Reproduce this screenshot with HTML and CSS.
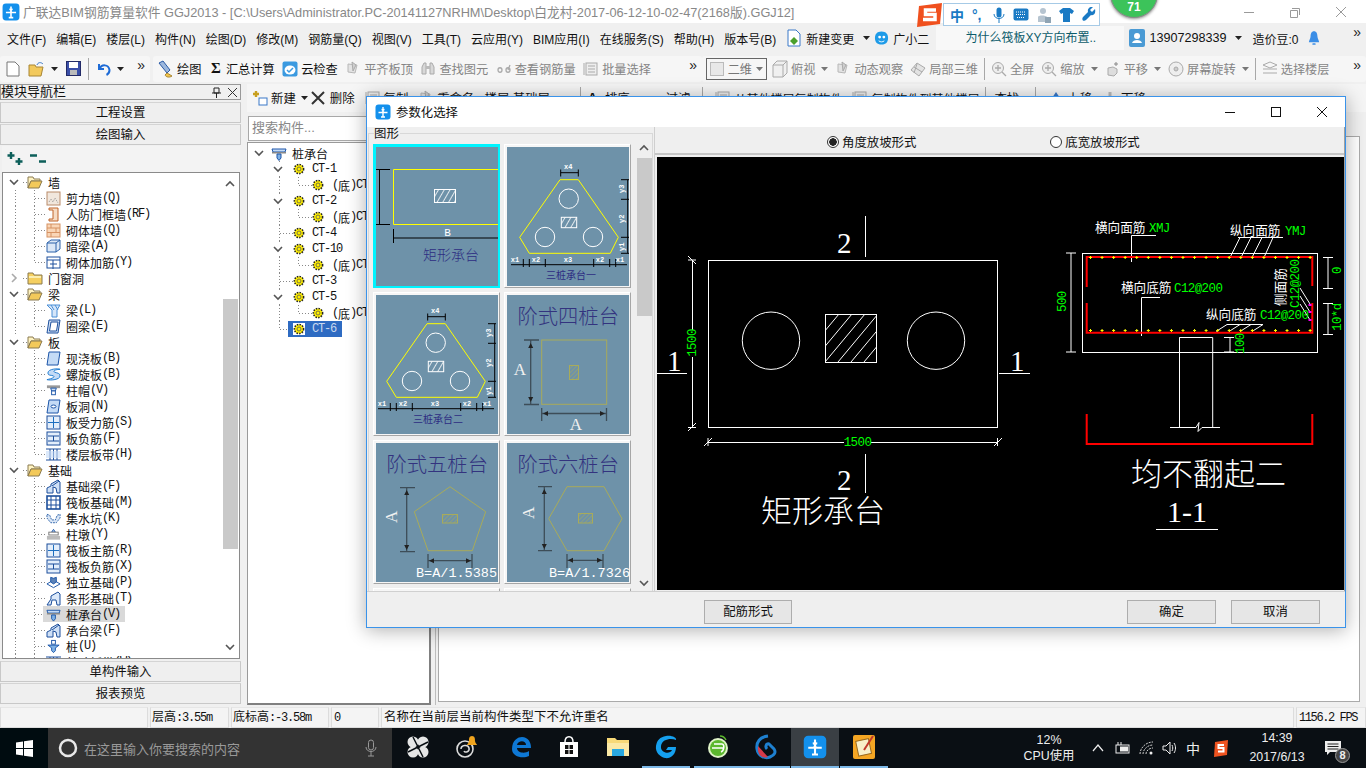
FILE: index.html
```html
<!DOCTYPE html>
<html lang="zh">
<head>
<meta charset="utf-8">
<title>广联达BIM钢筋算量软件</title>
<link rel="stylesheet" href="styles.css">
</head>
<body>
<svg class="sprite" aria-hidden="true">
<defs>
<pattern id="hatchW" width="5" height="5" patternUnits="userSpaceOnUse" patternTransform="rotate(30)"><line x1="0" y1="0" x2="0" y2="5" stroke="#fff" stroke-width="1.6"/></pattern>
<pattern id="hatchY" width="3" height="3" patternUnits="userSpaceOnUse" patternTransform="rotate(45)"><line x1="0" y1="0" x2="0" y2="3" stroke="#a8ab5a" stroke-width="1"/></pattern>
<symbol id="chev" viewBox="0 0 10 10"><polyline points="1,3 5,7 9,3" fill="none" stroke="#555" stroke-width="1.6"/></symbol>
<symbol id="chevr" viewBox="0 0 10 10"><polyline points="3,1 7,5 3,9" fill="none" stroke="#aaa" stroke-width="1.6"/></symbol>
<symbol id="folderO" viewBox="0 0 16 14"><path d="M1 2h5l1 2h6v2H4L1 13z" fill="#fff3c0" stroke="#8a7a50"/><path d="M4 6h11l-3 7H1z" fill="#f3c95a" stroke="#8a7a50"/></symbol>
<symbol id="folderC" viewBox="0 0 16 14"><path d="M1 2h5l1 2h8v9H1z" fill="#f5cf5f" stroke="#8a7a50"/><path d="M2 5h12v2H2z" fill="#fbeeb0"/></symbol>
<symbol id="gear" viewBox="0 0 12 12"><circle cx="6" cy="6" r="4.6" fill="#ffef00" stroke="#222" stroke-width="1.6" stroke-dasharray="1.5 1.2"/><circle cx="6" cy="6" r="2" fill="#ffef00" stroke="#555" stroke-width=".8"/></symbol>
<symbol id="app" viewBox="0 0 16 16"><rect x=".5" y=".5" width="15" height="15" rx="3" fill="#1390ec"/><path d="M8 3v10M3.5 8.5h3a1.5 1.5 0 0 0 0-3M12.5 8.5h-3a1.5 1.5 0 0 1 0-3M6 13h4" fill="none" stroke="#fff" stroke-width="1.4"/></symbol>
<symbol id="sw" viewBox="0 0 15 15"><rect x="1" y="1" width="13" height="13" fill="#f1e7dd" stroke="#b98b6a"/><path d="M3 11l2-3 2 3 2-4 3 5" stroke="#999" stroke-dasharray="1 1" fill="none"/></symbol>
<symbol id="door" viewBox="0 0 15 15"><path d="M3 1h9v13H3v-2h4V3H3z" fill="#f6dcc5" stroke="#c0642a"/></symbol>
<symbol id="brick" viewBox="0 0 15 15"><rect x="1" y="1" width="13" height="13" fill="#f9d6b7" stroke="#d69263"/><path d="M1 5h13M1 9.500h13M5 1v4M10 5v4.500M5 9.500V14" stroke="#d69263" fill="none"/></symbol>
<symbol id="ab" viewBox="0 0 15 15"><path d="M1 4l4-3h9v9l-4 3H1z" fill="#dbe7f6" stroke="#2d62aa"/><path d="M1 4h9v9M10 4l4-3" fill="none" stroke="#2d62aa"/></symbol>
<symbol id="rb" viewBox="0 0 15 15"><rect x="1" y="2" width="13" height="11" fill="#fff" stroke="#1d4f9c"/><path d="M1 5h13M7 5v9M4 9h7" stroke="#1d4f9c" fill="none"/></symbol>
<symbol id="beam" viewBox="0 0 15 15"><path d="M1 2h13l-3 5v7H6V7z" fill="#d5e6fa" stroke="#4a8fd6"/><path d="M5 2l3 5M9 2l3 5" stroke="#4a8fd6"/></symbol>
<symbol id="ring" viewBox="0 0 15 15"><path d="M3 1h11l-2 13H1z" fill="#cfe0f6" stroke="#1d4f9c"/><path d="M5 3h7l-1.500 9H3.500z" fill="#fff" stroke="#1d4f9c"/></symbol>
<symbol id="slab" viewBox="0 0 15 15"><path d="M3 1h11l-2 13H1z" fill="#c4dbf6" stroke="#1c55a8"/></symbol>
<symbol id="spiral" viewBox="0 0 16 15"><path d="M2 6c0-5 12-5 13-4-3 0-8 1-6 3 3 1 6 1 6 4 0 4-10 5-14 4 4-1 9-2 7-4-2-1-6 0-6-3z" fill="#c4dbf6" stroke="#1c7ad0"/></symbol>
<symbol id="cap" viewBox="0 0 16 15"><rect x="1" y="2" width="14" height="3" fill="#999"/><path d="M5 5h6l-1 3H6z" fill="#cfe0f6" stroke="#1c55a8"/><rect x="6" y="8" width="4" height="4" fill="#fff" stroke="#1c55a8"/></symbol>
<symbol id="hole" viewBox="0 0 15 15"><path d="M3 1h11l-2 13H1z" fill="#c4dbf6" stroke="#1c55a8"/><ellipse cx="7.500" cy="7.500" rx="2.500" ry="1.500" fill="#fff" stroke="#1c55a8"/></symbol>
<symbol id="grid1" viewBox="0 0 15 15"><rect x="1" y="1" width="13" height="13" fill="#e3eefb" stroke="#1d4f9c"/><path d="M7.500 2v11M2 7.500h11" stroke="#1d6fc0" fill="none"/></symbol>
<symbol id="grid2" viewBox="0 0 15 15"><rect x="1" y="1" width="13" height="13" fill="#e3eefb" stroke="#1d4f9c"/><path d="M2 5h11M2 10h11M7.500 5v5" stroke="#1d4f9c" fill="none"/></symbol>
<symbol id="band" viewBox="0 0 15 15"><path d="M0 2h15M0 13h15M4 2v11M7.500 2v11M11 2v11" stroke="#1d4f9c" fill="none"/><rect y="4" width="15" height="7" fill="#c4dbf6" opacity=".6"/></symbol>
<symbol id="found" viewBox="0 0 15 15"><path d="M1 14V9l4-2V5l7-4 2 2v11h-3l-1-5-3-1v6z" fill="#cfe0f6" stroke="#1d4f9c"/><path d="M6 7l7-5" stroke="#1d4f9c"/></symbol>
<symbol id="raft" viewBox="0 0 15 15"><rect x="1" y="1" width="13" height="13" fill="#fff" stroke="#1d4f9c" stroke-width="1.600"/><path d="M1 5h13M1 10h13M5 1v13M10 1v13" stroke="#1d4f9c"/></symbol>
<symbol id="sump" viewBox="0 0 16 15"><path d="M1 3l3 1 2 5h4l2-5 3-1v4l-4 5H5L1 7z" fill="#dbe7f6" stroke="#2d62aa" stroke-dasharray="2 1"/></symbol>
<symbol id="pad" viewBox="0 0 16 15"><path d="M6 5l2-3 2 3z" fill="#c4dbf6" stroke="#1c55a8"/><rect x="3" y="5" width="10" height="3" fill="#fff" stroke="#777"/><rect x="1" y="9" width="14" height="4" fill="#bbb"/></symbol>
<symbol id="iso" viewBox="0 0 16 15"><path d="M1 9l7-4 7 4-7 4z" fill="#fff" stroke="#1c55a8"/><path d="M5 7V2l3 1 3-1v5l-3 2z" fill="#5b82b8" stroke="#1c55a8"/></symbol>
<symbol id="strip" viewBox="0 0 15 15"><path d="M1 14l4-6V5l7-4 2 2v11H11l-1-5H6l-1 5z" fill="#dce9f9" stroke="#1d4f9c"/></symbol>
<symbol id="cap2" viewBox="0 0 16 15"><path d="M1 3h14l-1 3H2z" fill="#c4dbf6" stroke="#1c55a8"/><rect x="1" y="6" width="14" height="1.500" fill="#888"/><path d="M6 8h4v4l-2 2.500L6 12z" fill="#7fb2e6" stroke="#1c55a8"/></symbol>
<symbol id="pile" viewBox="0 0 16 15"><rect x="6" y="1" width="4" height="4" fill="#fff" stroke="#1c55a8"/><path d="M2 6h12l-4 3v3l-2 2-2-2V9z" fill="#7fb2e6" stroke="#1c55a8"/></symbol>
<symbol id="caret" viewBox="0 0 7 4"><path d="M0 0h7L3.500 4z" fill="#222"/></symbol>
<symbol id="caretg" viewBox="0 0 7 4"><path d="M0 0h7L3.500 4z" fill="#777"/></symbol>
<symbol id="gicon" viewBox="0 0 16 16"><path d="M3 3l9 1-2 8-7-1z" fill="#e3e3e3" stroke="#b8b8b8"/><path d="M7 1l4 3-3 6z" fill="#cfcfcf" stroke="#aaa"/></symbol>
<symbol id="bino" viewBox="0 0 16 16"><path d="M2 6l2-4h2v11H2zM14 6l-2-4h-2v11h4z" fill="#d8d8d8" stroke="#aaa"/><rect x="6" y="5" width="4" height="3" fill="#bbb"/></symbol>
<symbol id="list" viewBox="0 0 16 16"><rect x="3" y="2" width="11" height="12" fill="#eee" stroke="#aaa"/><path d="M1 2v12M5 5h7M5 8h7M5 11h7" stroke="#aaa"/></symbol>
<symbol id="glass" viewBox="0 0 16 16"><circle cx="7" cy="7" r="5.500" fill="#eee" stroke="#aaa"/><path d="M11 11l4 4M7 4v6M4 7h6" stroke="#aaa" stroke-width="1.300"/></symbol>
</defs>
</svg>

<header class="title">
  <svg class="ic16" width="18" height="18"><use href="#app"/></svg>
  <span class="title-text">广联达BIM钢筋算量软件 GGJ2013 - [C:\Users\Administrator.PC-20141127NRHM\Desktop\白龙村-2017-06-12-10-02-47(2168版).GGJ12]</span>
  <div class="wctl">
    <svg width="12" height="12" viewBox="0 0 12 12"><path d="M1 6.500h10" stroke="#9a9a9a"/></svg>
    <svg width="12" height="12" viewBox="0 0 12 12"><path d="M3 2.500h7.500V9M1.500 4.500h7v7h-7z" fill="none" stroke="#9a9a9a"/></svg>
    <svg width="12" height="12" viewBox="0 0 12 12"><path d="M1 1l10 10M11 1L1 11" stroke="#9a9a9a"/></svg>
  </div>
</header>

<nav class="menu">
  <span>文件(F)</span><span>编辑(E)</span><span>楼层(L)</span><span>构件(N)</span><span>绘图(D)</span><span>修改(M)</span><span>钢筋量(Q)</span><span>视图(V)</span><span>工具(T)</span><span>云应用(Y)</span><span>BIM应用(I)</span><span>在线服务(S)</span><span>帮助(H)</span><span>版本号(B)</span>
  <span class="mi"><svg width="16" height="18" viewBox="0 0 16 18"><path d="M2 1h8l4 4v12H2z" fill="#fff" stroke="#3a78c8"/><path d="M8 8l4 4-4 4-4-4z" fill="#4aa02c"/></svg>新建变更<svg class="car" width="7" height="4"><use href="#caret"/></svg></span>
  <span class="mi ai"><svg width="15" height="16" viewBox="0 0 16 16"><path d="M8 1c5 0 7 3 7 7s-2 7-7 7-7-3-7-7 2-7 7-7z" fill="#1e9be8"/><circle cx="6" cy="7" r="1.500" fill="#fff"/><circle cx="10.500" cy="7" r="1.500" fill="#fff"/><path d="M5 11c2 1.500 4 1.500 6 0" stroke="#fff" fill="none"/></svg>广小二</span>
  <span class="news">为什么筏板XY方向布置..</span>
  <span class="mi user"><svg width="16" height="18" viewBox="0 0 16 18"><rect width="16" height="18" rx="2" fill="#4a9ad4"/><circle cx="8" cy="7" r="3" fill="#fff"/><path d="M3 14c1-4 9-4 10 0z" fill="#fff"/></svg>13907298339<svg class="car" width="7" height="4"><use href="#caret"/></svg></span>
  <span class="bean">造价豆:0</span>
  <svg width="12" height="18" viewBox="0 0 14 18"><path d="M7 1c3 0 4 3 4 6 0 3 2 5 2 7H1c0-2 2-4 2-7 0-3 1-6 4-6z" fill="#3b8ee6"/><rect x="5" y="15" width="4" height="2" rx="1" fill="#3b8ee6"/></svg>
  <span class="more">»</span>
</nav>

<section class="tools">
  <div class="tg tg1">
    <svg width="14" height="16" viewBox="0 0 14 16"><path d="M1 1h8l4 4v10H1z" fill="#fff" stroke="#777"/></svg>
    <svg class="ml8" width="18" height="16" viewBox="0 0 18 16"><path d="M1 4h6l1 2h7l-2 9H1z" fill="#f2c95c" stroke="#a88635"/><path d="M9 4c1-3 4-3 6-1" stroke="#3a78c8" fill="none"/></svg>
    <svg class="car" width="7" height="4"><use href="#caret"/></svg>
    <svg class="ml8" width="15" height="15" viewBox="0 0 15 15"><rect x=".5" y=".5" width="14" height="14" fill="#3a4fa8" stroke="#222a66"/><rect x="3" y="1" width="9" height="6" fill="#fff"/><rect x="4" y="9" width="7" height="5" fill="#bbb"/></svg>
    <span class="sep"></span>
    <svg width="16" height="16" viewBox="0 0 16 16"><path d="M3 3v5h5M3.500 8c2-5 9-5 10 1 0 2-1 4-3 5" fill="none" stroke="#1e6bd6" stroke-width="2"/></svg>
    <svg class="car" width="7" height="4"><use href="#caret"/></svg>
    <span class="more">»</span>
  </div>
  <div class="tg tg2">
    <span class="tb"><svg width="16" height="18" viewBox="0 0 16 18"><path d="M1 3l4-2 7 9-3 3z" fill="#9db8dd" stroke="#2a5aa6"/><path d="M9 13l5 3c-3 2-6 1-7-1z" fill="#f1c44c" stroke="#a88635"/></svg>绘图</span>
    <span class="tb"><b class="sig">Σ</b>汇总计算</span>
    <span class="tb"><svg width="16" height="16" viewBox="0 0 16 16"><rect x=".5" y=".5" width="15" height="15" rx="2" fill="#3b9ae0"/><ellipse cx="8" cy="9" rx="5.500" ry="4.500" fill="#fff"/><path d="M5 9l2 2 4-4" stroke="#3b9ae0" stroke-width="1.500" fill="none"/></svg>云检查</span>
    <span class="tb off"><svg width="16" height="16"><use href="#gicon"/></svg>平齐板顶</span>
    <span class="tb off"><svg width="16" height="16"><use href="#bino"/></svg>查找图元</span>
    <span class="tb off"><svg width="16" height="16" viewBox="0 0 16 16"><path d="M2 9c0-3 4-3 4 0s-4 3-4 0zM10 9c0-3 4-3 4 0s-4 3-4 0zM14 4l-2 5" fill="none" stroke="#aaa" stroke-width="1.300"/></svg>查看钢筋量</span>
    <span class="tb off"><svg width="16" height="16"><use href="#list"/></svg>批量选择</span>
    <span class="more">»</span>
  </div>
  <div class="tg tg3">
    <span class="combo"><i class="swatch"></i>二维<svg width="7" height="4"><use href="#caretg"/></svg></span>
    <span class="tb off first"><svg width="16" height="18" viewBox="0 0 16 18"><path d="M1 5l4-4h10v12l-4 4H1z" fill="#f0f0f0" stroke="#aaa"/><path d="M1 5h10v12M11 5l4-4" fill="none" stroke="#aaa"/></svg>俯视<svg class="car" width="7" height="4"><use href="#caretg"/></svg></span>
    <span class="tb off"><svg width="16" height="16"><use href="#gicon"/></svg>动态观察</span>
    <span class="tb off"><svg width="16" height="16" viewBox="0 0 16 16"><path d="M1 9l6-7 8 5-6 8z" fill="#e3e3e3" stroke="#aaa"/><path d="M4 6l8 5M7 3l-3 9" stroke="#aaa"/></svg>局部三维</span>
    <span class="sep"></span>
    <span class="tb off"><svg width="16" height="16"><use href="#glass"/></svg>全屏</span>
    <span class="tb off"><svg width="16" height="16"><use href="#glass"/></svg>缩放<svg class="car" width="7" height="4"><use href="#caretg"/></svg></span>
    <span class="tb off"><svg width="16" height="16" viewBox="0 0 16 16"><path d="M3 14V7l5-1 4 2v4l-3 3z" fill="#ddd" stroke="#aaa"/><path d="M11 1v4M9 3h4" stroke="#888"/></svg>平移<svg class="car" width="7" height="4"><use href="#caretg"/></svg></span>
    <span class="tb off"><svg width="16" height="16" viewBox="0 0 16 16"><circle cx="8" cy="8" r="7" fill="#eee" stroke="#aaa"/><circle cx="8" cy="8" r="2" fill="#ccc" stroke="#aaa"/></svg>屏幕旋转<svg class="car" width="7" height="4"><use href="#caretg"/></svg></span>
    <span class="sep"></span>
    <span class="tb off"><svg width="16" height="16" viewBox="0 0 16 16"><path d="M1 4l7-3 7 3-7 3zM1 8h14M1 12h14" fill="none" stroke="#aaa"/></svg>选择楼层</span>
    <span class="more end">»</span>
  </div>
</section>

<main class="work">
  <aside class="nav">
    <div class="nav-head"><span>模块导航栏</span><span class="pin"><svg width="9" height="11" viewBox="0 0 9 11"><path d="M2 1h5v5H2zM0 6h9M4.500 6v5" fill="none" stroke="#222"/></svg><svg width="9" height="9" viewBox="0 0 9 9"><path d="M0 0l9 9M9 0L0 9" stroke="#333"/></svg></span></div>
    <div class="nbtn">工程设置</div>
    <div class="nbtn">绘图输入</div>
    <div class="exp">
      <svg width="17" height="16" viewBox="0 0 17 16"><path d="M4 1v7M.5 4.500h7M12 7v7M8.500 10.500h7" stroke="#0d5f5a" stroke-width="2.400"/></svg>
      <svg width="17" height="16" viewBox="0 0 17 16"><path d="M0 4.500h7M9 10.500h7" stroke="#0d5f5a" stroke-width="2.400"/></svg>
    </div>
    <div class="tree-box">
      <div class="tree">
        <div class="r0"><svg width="10" height="10"><use href="#chev"/></svg><svg class="fo" width="16" height="14"><use href="#folderO"/></svg>墙</div>
        <div class="r1"><svg width="15" height="15"><use href="#sw"/></svg>剪力墙<span class="m">(Q)</span></div>
        <div class="r1"><svg width="15" height="15"><use href="#door"/></svg>人防门框墙<span class="m">(RF)</span></div>
        <div class="r1"><svg width="15" height="15"><use href="#brick"/></svg>砌体墙<span class="m">(Q)</span></div>
        <div class="r1"><svg width="15" height="15"><use href="#ab"/></svg>暗梁<span class="m">(A)</span></div>
        <div class="r1 last"><svg width="15" height="15"><use href="#rb"/></svg>砌体加筋<span class="m">(Y)</span></div>
        <div class="r0"><svg width="10" height="10"><use href="#chevr"/></svg><svg class="fo" width="16" height="14"><use href="#folderC"/></svg>门窗洞</div>
        <div class="r0"><svg width="10" height="10"><use href="#chev"/></svg><svg class="fo" width="16" height="14"><use href="#folderO"/></svg>梁</div>
        <div class="r1"><svg width="15" height="15"><use href="#beam"/></svg>梁<span class="m">(L)</span></div>
        <div class="r1 last"><svg width="15" height="15"><use href="#ring"/></svg>圈梁<span class="m">(E)</span></div>
        <div class="r0"><svg width="10" height="10"><use href="#chev"/></svg><svg class="fo" width="16" height="14"><use href="#folderO"/></svg>板</div>
        <div class="r1"><svg width="15" height="15"><use href="#slab"/></svg>现浇板<span class="m">(B)</span></div>
        <div class="r1"><svg width="15" height="15"><use href="#spiral"/></svg>螺旋板<span class="m">(B)</span></div>
        <div class="r1"><svg width="15" height="15"><use href="#cap"/></svg>柱帽<span class="m">(V)</span></div>
        <div class="r1"><svg width="15" height="15"><use href="#hole"/></svg>板洞<span class="m">(N)</span></div>
        <div class="r1"><svg width="15" height="15"><use href="#grid1"/></svg>板受力筋<span class="m">(S)</span></div>
        <div class="r1"><svg width="15" height="15"><use href="#grid2"/></svg>板负筋<span class="m">(F)</span></div>
        <div class="r1 last"><svg width="15" height="15"><use href="#band"/></svg>楼层板带<span class="m">(H)</span></div>
        <div class="r0"><svg width="10" height="10"><use href="#chev"/></svg><svg class="fo" width="16" height="14"><use href="#folderO"/></svg>基础</div>
        <div class="r1"><svg width="15" height="15"><use href="#found"/></svg>基础梁<span class="m">(F)</span></div>
        <div class="r1"><svg width="15" height="15"><use href="#raft"/></svg>筏板基础<span class="m">(M)</span></div>
        <div class="r1"><svg width="15" height="15"><use href="#sump"/></svg>集水坑<span class="m">(K)</span></div>
        <div class="r1"><svg width="15" height="15"><use href="#pad"/></svg>柱墩<span class="m">(Y)</span></div>
        <div class="r1"><svg width="15" height="15"><use href="#grid1"/></svg>筏板主筋<span class="m">(R)</span></div>
        <div class="r1"><svg width="15" height="15"><use href="#grid2"/></svg>筏板负筋<span class="m">(X)</span></div>
        <div class="r1"><svg width="15" height="15"><use href="#iso"/></svg>独立基础<span class="m">(P)</span></div>
        <div class="r1"><svg width="15" height="15"><use href="#strip"/></svg>条形基础<span class="m">(T)</span></div>
        <div class="r1"><span class="hl"><svg width="15" height="15"><use href="#cap2"/></svg>桩承台<span class="m">(V)</span></span></div>
        <div class="r1"><svg width="15" height="15"><use href="#found"/></svg>承台梁<span class="m">(F)</span></div>
        <div class="r1"><svg width="15" height="15"><use href="#pile"/></svg>桩<span class="m">(U)</span></div>
        <div class="r1"><svg width="15" height="15"><use href="#band"/></svg>基础板带<span class="m">(W)</span></div>
      </div>
      <div class="sb">
        <svg class="ar" width="10" height="10"><use href="#chev" transform="rotate(180 5 5)"/></svg>
        <div class="sb-thumb"></div>
        <svg class="ar dn" width="10" height="10"><use href="#chev"/></svg>
      </div>
    </div>
    <div class="nbtn b1">单构件输入</div>
    <div class="nbtn">报表预览</div>
  </aside>

  <div class="stage">
    <div class="bar">
      <span class="tb"><svg width="16" height="16" viewBox="0 0 16 16"><path d="M4 1v6M1 4h6" stroke="#c8a020" stroke-width="2.400"/><rect x="7" y="8" width="8" height="7" fill="#fff" stroke="#3a78c8"/></svg>新建<svg class="car" width="7" height="4"><use href="#caret"/></svg></span>
      <span class="tb del"><svg width="14" height="14" viewBox="0 0 14 14"><path d="M1 1l12 12M13 1L1 13" stroke="#333" stroke-width="2"/></svg>删除</span>
      <span class="tb"><svg width="16" height="16"><use href="#list"/></svg>复制</span>
      <span class="tb"><svg width="16" height="16"><use href="#gicon"/></svg>重命名</span>
      <span class="tb">楼层 基础层</span>
      <span class="sep s18"></span>
      <span class="tb w2"><b>A</b>排序</span>
      <span class="tb w3">过滤</span>
      <span class="sep"></span>
      <span class="tb t12"><svg width="16" height="16"><use href="#list"/></svg>从其他楼层复制构件</span>
      <span class="tb t12"><svg width="16" height="16"><use href="#list"/></svg>复制构件到其他楼层</span>
      <span class="sep sn"></span>
      <span class="tb tn">查找</span>
      <span class="sep s4"></span>
      <span class="tb"><svg width="16" height="16" viewBox="0 0 16 16"><path d="M8 2l4 6H4zM6.500 8h3v6h-3z" fill="#3a78c8"/></svg>上移</span>
      <span class="tb"><svg width="16" height="16" viewBox="0 0 16 16"><path d="M8 14l4-6H4zM6.500 8h3V2h-3z" fill="#bbb"/></svg>下移</span>
    </div>
    <div class="panes">
      <div class="mid">
        <div class="search">搜索构件...</div>
        <div class="mtree">
          <div class="t0"><svg width="10" height="10"><use href="#chev"/></svg><svg width="16" height="15"><use href="#cap2"/></svg>桩承台</div>
          <div class="t1"><svg width="10" height="10"><use href="#chev"/></svg><svg width="12" height="12"><use href="#gear"/></svg><span class="m">CT-1</span></div>
          <div class="t2"><svg width="12" height="12"><use href="#gear"/></svg><span class="m">(</span>底<span class="m">)CT-1</span></div>
          <div class="t1"><svg width="10" height="10"><use href="#chev"/></svg><svg width="12" height="12"><use href="#gear"/></svg><span class="m">CT-2</span></div>
          <div class="t2"><svg width="12" height="12"><use href="#gear"/></svg><span class="m">(</span>底<span class="m">)CT-2</span></div>
          <div class="t1 nc"><svg width="12" height="12"><use href="#gear"/></svg><span class="m">CT-4</span></div>
          <div class="t1"><svg width="10" height="10"><use href="#chev"/></svg><svg width="12" height="12"><use href="#gear"/></svg><span class="m">CT-10</span></div>
          <div class="t2"><svg width="12" height="12"><use href="#gear"/></svg><span class="m">(</span>底<span class="m">)CT-10</span></div>
          <div class="t1 nc"><svg width="12" height="12"><use href="#gear"/></svg><span class="m">CT-3</span></div>
          <div class="t1"><svg width="10" height="10"><use href="#chev"/></svg><svg width="12" height="12"><use href="#gear"/></svg><span class="m">CT-5</span></div>
          <div class="t2"><svg width="12" height="12"><use href="#gear"/></svg><span class="m">(</span>底<span class="m">)CT-5</span></div>
          <div class="t1 nc end"><span class="cur"><svg width="12" height="12"><use href="#gear"/></svg><span class="m">CT-6</span></span></div>
        </div>
      </div>
      <div class="draw"><div class="draw-in"></div></div>
    </div>
  </div>
</main>

<footer class="status">
  <span class="c c0"></span>
  <span class="c c1">层高<span class="m">:3.55m</span></span>
  <span class="c c2">底标高<span class="m">:-3.58m</span></span>
  <span class="c c3"><span class="m">0</span></span>
  <span class="c c4">名称在当前层当前构件类型下不允许重名</span>
  <span class="c c5"><span class="m">1156.2 FPS</span></span>
</footer>

<div class="taskbar">
  <div class="start"><svg width="17" height="17" viewBox="0 0 17 17"><path d="M0 2.500l7-1v6.500H0zM8 1.300l9-1.300v8H8zM0 9h7v6.500l-7-1zM8 9h9v8l-9-1.300z" fill="#fff"/></svg></div>
  <div class="tsearch"><svg width="20" height="20" viewBox="0 0 20 20"><circle cx="10" cy="10" r="8" fill="none" stroke="#e8e8e8" stroke-width="2.500"/></svg><span>在这里输入你要搜索的内容</span><svg class="mic" width="12" height="18" viewBox="0 0 12 18"><rect x="3.500" y="1" width="5" height="10" rx="2.500" fill="none" stroke="#999"/><path d="M1 8c0 6 10 6 10 0M6 13v4M3 17h6" fill="none" stroke="#999"/></svg></div>
  <div class="ti ml2"><svg width="24" height="24" viewBox="0 0 24 24"><g fill="#e6e6e6"><circle cx="7" cy="7" r="5.500"/><circle cx="17" cy="7" r="5.500"/><circle cx="7" cy="17" r="5.500"/><circle cx="17" cy="17" r="5.500"/></g><path d="M12 12L7 2M12 12l10-5M12 12l5 10M12 12L2 17" stroke="#0a0f14" stroke-width="1.500"/></svg></div>
  <div class="ti"><svg width="28" height="28" viewBox="0 0 28 28"><circle cx="13" cy="16" r="8" fill="none" stroke="#ddd" stroke-width="1.600"/><path d="M9 16c0-4 7-5 8-1s-4 5-5 3" fill="none" stroke="#ddd" stroke-width="1.500"/><path d="M20 3c3 0 3 3 3 5s2 3 2 4h-10c0-1 2-2 2-4s0-5 3-5z" fill="#f0a41e"/></svg></div>
  <div class="ti ml7"><svg width="24" height="24" viewBox="0 0 24 24"><path d="M3 14C3 5 9 2 13 2c6 0 9 5 9 11H8c0 5 8 6 12 3v5c-6 3-17 1-17-7zM8 10h9c0-5-8-5-9 0z" fill="#0e78d5"/></svg></div>
  <div class="ti"><svg width="20" height="22" viewBox="0 0 20 22"><path d="M1 6h18v15H1z" fill="#fff"/><path d="M6 6c0-7 8-7 8 0" fill="none" stroke="#fff" stroke-width="1.500"/><path d="M6 9h3.500v4H6zM10.500 9H14v4h-3.500zM6 14h3.500v4H6zM10.500 14H14v4h-3.500z" fill="#111"/></svg></div>
  <div class="ti ml1"><svg width="22" height="20" viewBox="0 0 22 20"><path d="M0 1h8l2 2h12v16H0z" fill="#f7d978"/><path d="M0 6h22v13H0z" fill="#fbe9a6"/><rect x="5" y="12" width="12" height="7" fill="#29a8e0"/></svg></div>
  <div class="ti on"><svg width="24" height="26" viewBox="0 0 24 26"><path d="M12 2c6-1 11 2 10 4-5-2-14-1-15 6s9 9 11 4l-6 0 2-3h8c0 8-6 12-11 11S1 18 2 12 6 3 12 2z" fill="#15a0ef"/></svg></div>
  <div class="ti on ml4"><svg width="24" height="26" viewBox="0 0 24 26"><circle cx="12" cy="14" r="10" fill="#dff3c8"/><circle cx="12" cy="14" r="8" fill="#5cb82e"/><path d="M6 14h12M8 10h8c3 0 2 7-1 8" stroke="#fff" stroke-width="1.600" fill="none"/><path d="M14 2c3 0 5 2 6 4" stroke="#5cb82e" stroke-width="1.500" fill="none"/></svg></div>
  <div class="ti on"><svg width="24" height="26" viewBox="0 0 24 26"><path d="M14 2c-8 1-12 6-11 13s8 10 13 8 6-5 4-8l-5-5c-3-1-4 3-2 5" fill="none" stroke="#1e80d0" stroke-width="3"/><path d="M4 12l10 11c-6 2-11-2-10-11z" fill="#d83a4a"/></svg></div>
  <div class="ti on act ml1"><svg width="24" height="24"><use href="#app"/></svg></div>
  <div class="ti on ml1"><svg width="24" height="26" viewBox="0 0 24 26"><rect x="1" y="1" width="22" height="24" rx="2" fill="#f5a623"/><rect x="5" y="6" width="13" height="15" fill="#f8efc8" stroke="#9a6a20" transform="rotate(-12 11 13)"/><path d="M21 2L12 16" stroke="#c0392b" stroke-width="2"/></svg></div>
  <div class="tray">
    <div class="cpu"><span>12%</span><span>CPU使用</span></div>
    <div class="ty w28"><svg width="12" height="8" viewBox="0 0 12 8"><path d="M1 7l5-6 5 6" fill="none" stroke="#eee" stroke-width="1.200"/></svg></div>
    <div class="ty w22"><svg width="16" height="12" viewBox="0 0 16 12"><rect x="1" y="3" width="13" height="8" fill="none" stroke="#eee"/><rect x="5" y="4.500" width="8" height="5" fill="#eee"/><path d="M3 0v3M6 0v3" stroke="#eee"/></svg></div>
    <div class="ty w24"><svg width="15" height="14" viewBox="0 0 15 14"><path d="M1 13c0-6 6-12 13-12M4 13c0-4 4-9 10-9M7 13c0-3 3-6 7-6" fill="none" stroke="#ccc" stroke-dasharray="2 1"/><circle cx="12" cy="12" r="1.500" fill="#eee"/></svg></div>
    <div class="ty w24"><svg width="16" height="14" viewBox="0 0 16 14"><path d="M1 5h3l4-4v12l-4-4H1z" fill="none" stroke="#eee"/><path d="M10 4c1 2 1 4 0 6M12 2c2 3 2 7 0 10" fill="none" stroke="#eee"/></svg></div>
    <div class="ty w22 zh">中</div>
    <div class="ty w34"><svg width="16" height="17" viewBox="0 0 16 17"><path d="M2 2l13-2-1 15-13 2z" fill="#ee5320"/><path d="M11 5H5.500v3h5v3.500H5" fill="none" stroke="#fff" stroke-width="2"/></svg></div>
    <div class="clock"><span>14:39</span><span>2017/6/13</span></div>
    <div class="notif"><svg width="16" height="15" viewBox="0 0 16 15"><path d="M0 0h16v11H5l-3 3v-3H0z" fill="#eee"/><path d="M2.500 3h11M2.500 5.500h11M2.500 8h11" stroke="#222"/></svg><span class="badge">8</span></div>
  </div>
</div>

<div class="ball">71</div>

<div class="ime">
  <svg class="ime-s" width="27" height="24" viewBox="0 0 27 24"><path d="M3 3l23-3-2 21-23 3z" fill="#f0501e"/><path d="M20 7H9.500v4.500h9.500V16.500H7" fill="none" stroke="#fff" stroke-width="3.500"/></svg>
  <div class="ime-bar">
    <span class="zh2">中</span>
    <span class="punc">°,</span>
    <svg width="12" height="16" viewBox="0 0 12 16"><rect x="3.500" y=".5" width="5" height="10" rx="2.500" fill="#1a7ac4"/><path d="M1 7c0 6 10 6 10 0M6 12v4" fill="none" stroke="#1a7ac4"/></svg>
    <svg width="16" height="13" viewBox="0 0 16 13"><rect x=".5" y=".5" width="15" height="12" rx="2" fill="#1a7ac4"/><path d="M3 4h10M3 6.500h10M4 9.500h8" stroke="#fff" stroke-dasharray="1 1"/></svg>
    <svg width="14" height="16" viewBox="0 0 14 16"><circle cx="6" cy="4" r="3" fill="#b6c4d0"/><path d="M1 15V10c0-2 8-2 9 0v5z" fill="#b6c4d0"/><rect x="8" y="10" width="6" height="6" fill="#8fa4b4"/></svg>
    <svg width="15" height="15" viewBox="0 0 15 15"><path d="M4 1h7l4 3-2 3-2-1v9H4V6L2 7 0 4z" fill="#1a7ac4"/></svg>
    <svg width="14" height="15" viewBox="0 0 14 15"><path d="M13 2l-3 3-2-2 3-3c-3-1-6 2-5 5L1 10c-2 3 1 5 3 3l5-5c3 1 5-2 4-6z" fill="#1a7ac4"/></svg>
  </div>
</div>

<div class="dlg">
  <div class="dlg-title">
    <svg width="16" height="16"><use href="#app"/></svg>
    <span>参数化选择</span>
    <div class="dctl">
      <svg width="12" height="12" viewBox="0 0 12 12"><path d="M1 6.500h10" stroke="#111"/></svg>
      <svg width="12" height="12" viewBox="0 0 12 12"><rect x="1.500" y="1.500" width="9" height="9" fill="none" stroke="#111"/></svg>
      <svg width="12" height="12" viewBox="0 0 12 12"><path d="M1 1l10 10M11 1L1 11" stroke="#111"/></svg>
    </div>
  </div>
  <div class="dlg-body">
    <div class="shapes">
      <div class="gbox">
        <div class="glabel">图形</div>
        <div class="gwrap">
          <div class="thumbs">
            <div class="thumb sel">
              <svg width="122" height="139" viewBox="0 0 122 139">
                <rect width="122" height="139" class="tbg"/>
                <path d="M17.500 22.500H122M17.500 77.500H122M17.500 22.500v55" class="ye"/>
                <rect x="58.500" y="42.500" width="21" height="13" fill="url(#hatchW)" stroke="#fff"/>
                <path d="M0 22.500h14M0 77.500h14M3.500 22.500v55M17.500 82v14M17.500 91H122" class="bk"/>
                <text x="71.500" y="89" class="tw" text-anchor="middle">B</text>
                <text x="47" y="113" class="tt14">矩形承台</text>
              </svg>
            </div>
            <div class="thumb">
              <svg width="122" height="139" viewBox="0 0 122 139">
                <rect width="122" height="139" class="tbg"/>
                <polygon points="53,32.700 71.300,32.700 111.300,90.300 103.300,106.300 22.300,106.300 12.700,90.300" class="ye"/>
                <circle cx="61.700" cy="51.700" r="9.700" class="wc"/><circle cx="38" cy="90" r="9.700" class="wc"/><circle cx="86" cy="90" r="9.700" class="wc"/>
                <rect x="54.300" y="70.300" width="15.400" height="10.400" fill="url(#hatchW)" stroke="#fff"/>
                <path d="M53.700 25.700h17.600M53.700 22.500v7M71.300 22.500v7M120.700 32.700v73.600M114 32.700h8M114 52.300h8M114 90.300h8M114 106.300h8M4 117.700h116M16.300 112v8M22.300 112v8M38.300 112v8M86.700 112v8M102.700 112v8M108.700 112v8" class="bk"/>
                <g class="tl"><text x="61.300" y="22" text-anchor="middle">x4</text><text x="8" y="115" text-anchor="middle">x1</text><text x="29" y="115" text-anchor="middle">x2</text><text x="61" y="115" text-anchor="middle">x3</text><text x="93" y="115" text-anchor="middle">x2</text><text x="113" y="115" text-anchor="middle">x1</text>
                <text transform="translate(117 46) rotate(-90)">y3</text><text transform="translate(117 76) rotate(-90)">y2</text><text transform="translate(117 104) rotate(-90)">y1</text></g>
                <text x="39" y="131.500" class="tt10">三桩承台一</text>
              </svg>
            </div>
            <div class="thumb">
              <svg width="122" height="139" viewBox="0 0 122 139">
                <rect width="122" height="139" class="tbg"/>
                <g transform="translate(-2 -4)">
                <polygon points="53,32.700 71.300,32.700 111.300,90.300 103.300,106.300 22.300,106.300 12.700,90.300" class="ye"/>
                <circle cx="61.700" cy="51.700" r="9.700" class="wc"/><circle cx="38" cy="90" r="9.700" class="wc"/><circle cx="86" cy="90" r="9.700" class="wc"/>
                <rect x="54.300" y="70.300" width="15.400" height="10.400" fill="url(#hatchW)" stroke="#fff"/>
                <path d="M53.700 25.700h17.600M53.700 22.500v7M71.300 22.500v7M120.700 32.700v73.600M114 32.700h8M114 52.300h8M114 90.300h8M114 106.300h8M4 117.700h116M16.300 112v8M22.300 112v8M38.300 112v8M86.700 112v8M102.700 112v8M108.700 112v8" class="bk"/>
                <g class="tl"><text x="61.300" y="22" text-anchor="middle">x4</text><text x="8" y="115" text-anchor="middle">x1</text><text x="29" y="115" text-anchor="middle">x2</text><text x="61" y="115" text-anchor="middle">x3</text><text x="93" y="115" text-anchor="middle">x2</text><text x="113" y="115" text-anchor="middle">x1</text>
                <text transform="translate(117 46) rotate(-90)">y3</text><text transform="translate(117 76) rotate(-90)">y2</text><text transform="translate(117 104) rotate(-90)">y1</text></g>
                <text x="39" y="131.500" class="tt10">三桩承台二</text>
                </g>
              </svg>
            </div>
            <div class="thumb">
              <svg width="122" height="139" viewBox="0 0 122 139">
                <rect width="122" height="139" class="tbg"/>
                <text x="10.500" y="29" class="tt20">阶式四桩台</text>
                <rect x="34.700" y="45" width="65" height="64.300" class="ol"/>
                <rect x="62.500" y="70.500" width="9" height="14" fill="url(#hatchY)" stroke="#a8ab5a"/>
                <path d="M17 45h15M23.700 45v64M17 109.500h15M34.700 113v13M99.500 113v13M34.700 118.500h65" class="dg"/>
                <path d="M23.700 48l-2.500 5h5zM23.700 107l-2.500-5h5zM36 118.500l5-2.500v5zM98 118.500l-5-2.500v5z" fill="#222"/>
                <text x="13" y="80" class="tA" text-anchor="middle">A</text>
                <text x="69" y="135" class="tA" text-anchor="middle">A</text>
              </svg>
            </div>
            <div class="thumb">
              <svg width="122" height="139" viewBox="0 0 122 139">
                <rect width="122" height="139" class="tbg"/>
                <text x="10.500" y="29" class="tt20">阶式五桩台</text>
                <polygon points="74,43.700 109.700,68.700 96.300,107.700 52,107.700 38.300,68.700" class="ol"/>
                <rect x="66.500" y="71.500" width="15" height="8.500" fill="url(#hatchY)" stroke="#a8ab5a"/>
                <path d="M24 44.700h15M30.700 44.700v64M24 108.700h15M52 111v14M96 111v14M52 117.700h44" class="dg"/>
                <path d="M30.700 47l-2.500 5h5zM30.700 107l-2.500-5h5zM53 117.700l5-2.500v5zM95 117.700l-5-2.500v5z" fill="#222"/>
                <text transform="translate(21 80) rotate(-90)" class="tA">A</text>
                <text x="40" y="134" class="tB">B=A/1.5385</text>
              </svg>
            </div>
            <div class="thumb">
              <svg width="122" height="139" viewBox="0 0 122 139">
                <rect width="122" height="139" class="tbg"/>
                <text x="10.500" y="29" class="tt20">阶式六桩台</text>
                <polygon points="60,43.700 97,43.700 115,75.700 97,107.700 60,107.700 41.700,75.700" class="ol"/>
                <rect x="71.500" y="70.500" width="14" height="9.500" fill="url(#hatchY)" stroke="#a8ab5a"/>
                <path d="M31 43.700h14M37.300 43.700v64M31 107.700h14M60 111v14M96 111v14M60 117.300h36" class="dg"/>
                <path d="M37.300 46l-2.500 5h5zM37.300 106l-2.500-5h5zM61 117.300l5-2.500v5zM95 117.300l-5-2.500v5z" fill="#222"/>
                <text transform="translate(27 76) rotate(-90)" class="tA">A</text>
                <text x="42" y="134" class="tB">B=A/1.7326</text>
              </svg>
            </div>
            <div class="thumb"></div>
            <div class="thumb"></div>
          </div>
          <div class="dsb">
            <svg width="10" height="10"><use href="#chev" transform="rotate(180 5 5)"/></svg>
            <div class="dsb-thumb"></div>
            <svg class="dn" width="10" height="10"><use href="#chev"/></svg>
          </div>
        </div>
      </div>
    </div>
    <div class="preview">
      <div class="radios">
        <span class="radio on"><i></i>角度放坡形式</span>
        <span class="radio"><i></i>底宽放坡形式</span>
      </div>
      <svg class="cad" width="687" height="433" viewBox="657 157 687 433">
        <clipPath id="sq"><rect x="825" y="314" width="52" height="48"/></clipPath>
        <g class="cw">
          <rect x="708.500" y="260.500" width="289" height="167"/>
          <circle cx="771" cy="340.700" r="28.700"/><circle cx="936" cy="340.700" r="28.700"/>
          <rect x="825.500" y="314.500" width="51" height="48"/>
          <g clip-path="url(#sq)"><path d="M799 362l40-48M812 362l40-48M825 362l40-48M838 362l40-48M851 362l40-48M864 362l40-48"/></g>
          <path d="M865.500 216v41M865.500 454v39M657 373.500h30M999 373.500h31"/>
          <path d="M692.500 260v70M692.500 357v70M688 260h8M688 427.500h8M688 256l8 8M688 431l8-8M708 442.500h136M871 442.500h126.500M708 438v8M997.500 438v8M704 446l8-8M994 446l8-8"/>
        </g>
        <g class="sf w26"><text x="837" y="253">2</text><text x="837" y="490">2</text><text x="667" y="371">1</text><text x="1010" y="371">1</text></g>
        <text x="692" y="343" class="gn" transform="rotate(-90 692 343)" text-anchor="middle" dy="4">1500</text>
        <text x="857.500" y="446" class="gn" text-anchor="middle">1500</text>
        <text x="761" y="522" class="big">矩形承台</text>

        <g class="cw">
          <rect x="1082.500" y="253.500" width="235" height="99"/>
          <path d="M1179.500 352V337.500h33.200V427.500M1179.500 337.500V427.500M1170 427.500h26l3 -5 -1 9 4 -4h18"/>
          <path d="M1071 253v99M1066 253h10M1066 352h10M1230 337v15M1224 337.500h10M1224 352h10M1328 257v31M1323 257.500h10M1323 288.500h10M1328 303v31M1323 303.500h10M1323 334.500h10"/>
          <path d="M1131.500 262V235.500H1156M1141.500 336V297.500H1160M1238 237.500h45M1240 237.500l-10 20M1251 237.500l-10 20M1262 237.500l-10 20M1273 237.500l-9 20M1227 324.500h36M1227 324.500l-11 7M1240 324.500l-11 7M1251 324.500l-11 7M1263 324.500l-11 7M1300 288l10 16M1300 296l10 16M1300 304l10 16"/>
          <path d="M1156 529.500h62"/>
        </g>
        <g class="rd">
          <path d="M1086.700 287V257H1312.300V286M1086.700 303V332.700H1312.300V303M1086.700 414V444H1312.300V414"/>
        </g>
        <g class="yd">
          <path d="M1089 257.500H1312M1089 330.500H1312" stroke-width="1" stroke-dasharray="3 8.560"/>
          <path d="M1090 257.500H1312M1090 330.500H1312" stroke-width="3" stroke-dasharray="1 10.560"/>
        </g>
        <path d="M1310 304v2M1310 311v2M1310 319v2" stroke="#f0f" stroke-width="3"/>
        <g class="lb">
          <text x="1095" y="232">横向面筋</text><text x="1230" y="235">纵向面筋</text><text x="1121" y="292">横向底筋</text><text x="1206" y="319">纵向底筋</text>
          <text transform="translate(1285 306) rotate(-90)">侧面筋</text>
        </g>
        <g class="gn">
          <text x="1149" y="232">XMJ</text><text x="1285" y="235">YMJ</text><text x="1174" y="292">C12@200</text><text x="1260" y="319">C12@200</text>
          <text transform="translate(1299 308) rotate(-90)">C12@200</text>
          <text transform="translate(1066 312) rotate(-90)">500</text>
          <text transform="translate(1244 354) rotate(-90)">100</text>
          <text transform="translate(1341 274) rotate(-90)">0</text>
          <text transform="translate(1341 331) rotate(-90)">10*d</text>
        </g>
        <text x="1131" y="485" class="big">均不翻起二</text>
        <text x="1167" y="522" class="sf w30">1-1</text>
      </svg>
    </div>
  </div>
  <div class="dlg-foot">
    <span class="btn first">配筋形式</span>
    <span class="btn push">确定</span>
    <span class="btn">取消</span>
  </div>
</div>
</body>
</html>
```

FILE: styles.css
```css
*{box-sizing:border-box}
html,body{margin:0;padding:0}
body{width:1366px;height:768px;overflow:hidden;background:#f0f0f0;font:12px "Liberation Sans","Noto Sans CJK SC",sans-serif;color:#111;display:flex;flex-direction:column}
.sprite{position:absolute;width:0;height:0}
svg{flex:none;display:block}
.m{font-family:"Liberation Mono","Noto Sans CJK SC",monospace;letter-spacing:-1.2px}

.title{height:23px;background:#fff;display:flex;align-items:center;padding-left:2px;gap:3px;flex:none}
.title-text{font-size:12.75px;color:#888;white-space:nowrap}
.wctl{margin-left:auto;display:flex;gap:34px;padding-right:19px}

.menu{height:30px;display:flex;align-items:center;padding-left:7px;gap:10px;white-space:nowrap;flex:none}
.mi{display:inline-flex;align-items:center;gap:4px}
.car{margin-left:5px}
.ai{margin-left:-6px}
.news{width:188px;height:24px;margin:0 -5px 0 -3px;background:#f8f8f8;color:#0d5c6b;line-height:24px;padding-left:29px}
.user{font-size:12.6px}
.more{font-size:14px;line-height:12px;color:#222;margin-left:auto;padding-right:5px;align-self:flex-start;margin-top:3px}

.tools{height:31px;display:flex;align-items:center;flex:none;font-size:12.2px;white-space:nowrap}
.tg{height:26px;display:flex;align-items:center;background:#f6f6f6;border-radius:3px;flex:none}
.tg1{width:150px;padding-left:6px}
.tg1 .more{margin-left:auto}
.ml8{margin-left:8px}
.sep{width:1px;height:22px;background:#a8a8a8;margin:0 7px;flex:none}
.tg2{width:549px;margin-left:3px;padding-left:5px;gap:7.5px}
.tg2 .more{margin-left:auto}
.tg3{width:664px;padding-left:4px;gap:7px}
.tg3 .sep{margin:0 -1px}
.tg3 .car{margin-left:3px}
.tg3 .first{margin-left:-2px}
.tb{display:inline-flex;align-items:center;gap:3px}
.tb.off{color:#858585}
.sig{font:bold 15px "Liberation Serif",serif;width:14px;text-align:center}
.combo{width:61px;height:22px;border:1px solid #666;display:flex;align-items:center;gap:4px;padding-left:3px;color:#777}
.combo svg{margin-left:auto;margin-right:3px}
.swatch{width:16px;height:14px;background:#e8e8e8;border:1px solid #bbb}
.more.end{margin-left:auto}

.work{flex:1;display:flex;min-height:0;padding-bottom:2px}
.nav{width:241px;display:flex;flex-direction:column;flex:none}
.nav-head{height:16px;border:1px solid #999;display:flex;justify-content:space-between;align-items:center;font-size:13px;line-height:14px;padding-right:3px;overflow:hidden;margin-bottom:2px}
.pin{display:flex;gap:7px;align-items:center}
.nbtn{height:21px;margin:0 0 1px;background:#efefef;border:1px solid #c8c8c8;border-top-color:#d4d4d4;text-align:center;line-height:20px;font-size:12.4px;flex:none}
.exp{height:26px;margin:0 1px 0 2px;display:flex;align-items:center;gap:6px;padding-left:5px;background:#f3f3f3;flex:none}
.tree-box{flex:1;min-height:0;margin:0 1px 2px 2px;border:1px solid #8a8a8a;background:#fff;display:flex;overflow:hidden}
.tree{flex:1;overflow:hidden;min-width:0;padding-top:1px}
.r0,.r1{height:16px;display:flex;align-items:center;white-space:nowrap}
.r0{padding-left:6px;background:repeating-linear-gradient(to right,#888 0 1px,transparent 1px 3px) 20px 8px/5px 1px no-repeat}
.fo{margin:0 5px 0 8px}
.r1{padding-left:43px;
  background:
   repeating-linear-gradient(#888 0 1px,transparent 1px 3px) 12px 0/1px 100% no-repeat,
   repeating-linear-gradient(#888 0 1px,transparent 1px 3px) 31px 0/1px 100% no-repeat,
   repeating-linear-gradient(to right,#888 0 1px,transparent 1px 3px) 32px 8px/11px 1px no-repeat}
.r1 svg{margin-right:5px}
.r1.last{background:
   repeating-linear-gradient(#888 0 1px,transparent 1px 3px) 12px 0/1px 100% no-repeat,
   repeating-linear-gradient(#888 0 1px,transparent 1px 3px) 31px 0/1px 8px no-repeat,
   repeating-linear-gradient(to right,#888 0 1px,transparent 1px 3px) 32px 8px/11px 1px no-repeat}
.hl{display:inline-flex;align-items:center;background:#d9d9d9;height:16px;padding-right:5px;margin-left:-3px;padding-left:3px}
.sb{width:16px;margin-right:1px;display:flex;flex-direction:column;align-items:center}
.sb .ar{margin-top:6px}
.sb-thumb{width:15px;height:250px;background:#c9c9c9;margin-top:110px}
.sb .dn{margin-top:auto;margin-bottom:6px}

.stage{flex:1;min-width:0;margin-left:6px;display:flex;flex-direction:column}
.bar{height:28px;background:#f5f5f5;display:flex;align-items:center;gap:10px;padding:0 0 0 5px;white-space:nowrap;flex:none;font-size:12.4px}
.bar .sep{margin:0 2px}
.bar .car{margin-left:2px}
.del{margin-left:-7px;gap:5px}
.bar .s18{margin-left:20px}
.w2{margin-left:-5px;gap:8px}
.w3{margin-left:26px}
.t12{font-size:12px}
.bar .sn{margin-left:-4px}
.tn{margin-left:-4px}
.bar .s4{margin-left:6px}
.panes{flex:1;min-height:0;display:flex}
.mid{width:184px;flex:none;display:flex;flex-direction:column}
.search{height:25px;margin:4px 1px 1px 1px;border:1px solid #a8a8a8;background:#fff;color:#888;font-size:13px;line-height:22px;padding-left:3px;flex:none}
.mtree{flex:1;background:#fff;border:1px solid #9a9a9a;border-bottom:2px solid #808080;border-right:2px solid #808080;padding-top:2px;overflow:hidden}
.t0,.t1,.t2{height:16px;display:flex;align-items:center;white-space:nowrap}
.t0{padding-left:6px}
.t0 svg:first-child{margin-right:7px}
.t0 svg:last-of-type{margin-right:5px}
.t1{padding-left:25px;background:repeating-linear-gradient(#888 0 1px,transparent 1px 3px) 31px 0/1px 100% no-repeat}
.t1 svg:first-child{background:#fff}
.t1 svg:nth-of-type(1){margin-right:10px}
.t1 svg:nth-of-type(2){margin-left:0;margin-right:7px}
.t1 svg:only-of-type{margin-left:20px;margin-right:7px}
.t1.nc{background:
   repeating-linear-gradient(#888 0 1px,transparent 1px 3px) 31px 0/1px 100% no-repeat,
   repeating-linear-gradient(to right,#888 0 1px,transparent 1px 3px) 32px 8px/13px 1px no-repeat}
.t1.end{background:
   repeating-linear-gradient(#888 0 1px,transparent 1px 3px) 31px 0/1px 8px no-repeat,
   repeating-linear-gradient(to right,#888 0 1px,transparent 1px 3px) 32px 8px/13px 1px no-repeat}
.cur{display:inline-flex;align-items:center;height:16px;background:#2e6bc2;color:#c9d8ee;margin-left:15px;padding:0 6px 0 5px;gap:7px}
.t1.nc .cur svg{margin:0}
.t2{padding-left:64px;background:
   repeating-linear-gradient(#888 0 1px,transparent 1px 3px) 31px 0/1px 100% no-repeat,
   repeating-linear-gradient(#888 0 1px,transparent 1px 3px) 50px 0/1px 8px no-repeat,
   repeating-linear-gradient(to right,#888 0 1px,transparent 1px 3px) 51px 8px/13px 1px no-repeat}
.t2 svg{margin-right:8px}
.draw{flex:1;margin-left:4px;border-left:1px solid #bdbdbd;padding:24px 6px 3px 2px}
.draw-in{height:100%;background:#fff;border:1px solid #aaa}

.status{height:21px;display:flex;gap:2px;flex:none;line-height:19px}
.c{border:1px solid #dcdcdc;border-top-color:#e6e6e6;padding-left:1px;white-space:nowrap;background:#f4f4f4}
.c0{width:148px}
.c1{width:79px}
.c2{width:98px}
.c3{width:48px;padding-left:2px}
.c4{flex:1;padding-left:2px;font-size:12.4px;letter-spacing:.1px}
.c5{width:70px;padding-left:2px}
.c5 .m{letter-spacing:-1.4px}

.taskbar{height:40px;flex:none;display:flex;background:#0a0f14;color:#eee}
.start{width:48px;display:flex;align-items:center;justify-content:center;background:#000c10}
.tsearch{width:344px;background:#333;display:flex;align-items:center;padding-left:10px;gap:6px;font-size:13px;color:#999}
.mic{margin-left:auto;margin-right:15px}
.ti{width:48px;display:flex;align-items:center;justify-content:center;border-bottom:2px solid transparent}
.ti.on{border-bottom-color:#7db9e8}
.ti.act{background:#3a3f44}
.ml1{margin-left:1px}
.ml2{margin-left:2px}
.ml4{margin-left:4px}
.ml7{margin-left:7px}
.tray{margin-left:auto;display:flex;align-items:center;height:100%;width:352px}
.cpu{width:70px;display:flex;flex-direction:column;align-items:center;gap:2px;font-size:12.4px;line-height:14px}
.ty{display:flex;align-items:center;justify-content:center}
.w22{width:22px}.w24{width:24px}.w28{width:28px}.w34{width:34px}
.zh{font-size:14px}
.clock{width:78px;display:flex;flex-direction:column;align-items:center;gap:4px;font-size:12.4px;line-height:15px}
.notif{width:50px;padding-left:9px;display:flex;align-items:center}
.badge{width:15px;height:15px;border-radius:50%;background:#444;border:1px solid #999;font-size:11px;font-weight:bold;text-align:center;line-height:13px;margin:14px 0 0 -6px}

.ball{position:absolute;left:1110px;top:-30px;width:48px;height:48px;border-radius:50%;background:#3cc35a;border:1px solid #8a8a8a;box-shadow:0 1px 3px rgba(0,0,0,.45);color:#fff;font-weight:bold;font-size:12px;text-align:center;line-height:72px}
.ime{position:absolute;left:916px;top:3px;display:flex;align-items:flex-start}
.ime-bar{width:157px;height:23px;background:#fff;border:1px solid #a6cae6;display:flex;align-items:center;padding-left:6px;gap:8px;color:#1a7ac4}
.zh2{font:bold 14px "Noto Sans CJK SC",sans-serif}
.punc{font-weight:bold;font-size:14px;width:13px;line-height:12px}

.dlg{position:absolute;left:366px;top:96px;width:980px;height:532px;background:#efefef;border:1px solid #3a93ea;box-shadow:0 2px 18px rgba(0,0,0,.32);display:flex;flex-direction:column}
.dlg-title{height:30px;background:#fff;display:flex;align-items:center;padding-left:8px;gap:5px;font-size:12.4px;flex:none}
.dctl{margin-left:auto;display:flex;gap:34px;padding-right:17px}
.dlg-body{height:464px;display:flex;flex:none}
.shapes{width:288px;flex:none;padding:6px 1px 0 1px;border-right:1px solid #cfcfcf}
.gbox{height:100%;border:1px solid #d8d8d8;border-bottom:0;display:flex;flex-direction:column}
.glabel{margin:-6px 0 0 5px;width:26px;height:13px;line-height:13px;font-size:12.4px;background:#efefef;flex:none}
.gwrap{display:flex;height:451px;overflow:hidden;padding:3px 0 0 4px}
.thumbs{width:262px;display:grid;grid-template-columns:127px 127px;grid-auto-rows:144px;gap:4px}
.thumb{background:#f6f6f6;border:1px solid;border-color:#fff #a6a6a6 #a6a6a6 #fff;display:flex;align-items:center;justify-content:center;width:127px;height:144px}
.thumb.sel{background:#00f4ff;border-color:#00f4ff}
.tbg{fill:#6e92a9}
.ye{fill:none;stroke:#ffff00;stroke-width:1}
.bk{fill:none;stroke:#000;stroke-width:1}
.wc{fill:none;stroke:#fff;stroke-width:1}
.ol{fill:none;stroke:#a8ab5a;stroke-width:1}
.dg{fill:none;stroke:#3d4d58;stroke-width:1.300}
.tw{font:11px "Liberation Mono",monospace;fill:#fff}
.tl text{font:bold 7px "Liberation Mono",monospace;fill:#fff}
.tt14{font:14px "Noto Sans CJK SC",sans-serif;font-weight:300;fill:#2d2d82}
.tt10{font:10px "Noto Sans CJK SC",sans-serif;fill:#2d2d82}
.tt20{font:20.300px "Noto Sans CJK SC",sans-serif;font-weight:300;fill:#33337f}
.tA{font:17px "Liberation Serif",serif;fill:#f0f0f0}
.tB{font:13.500px "Liberation Mono",monospace;fill:#fff}
.thumb svg{display:block}
.dsb{width:16px;margin-left:1px;display:flex;flex-direction:column;align-items:center}
.dsb svg{margin-top:-1px}
.dsb-thumb{width:15px;height:158px;background:#c9c9c9;margin-top:5px}
.dsb .dn{margin-top:auto;margin-bottom:3px}
.preview{flex:1;min-width:0;display:flex;flex-direction:column;padding-left:2px;border-right:1px solid #a0a0a0}
.radios{height:28px;margin-left:-2px;border-bottom:2px solid #c6c6c6;display:flex;align-items:center;font-size:12.4px;flex:none;padding:3px 0 0 172px}
.radio{display:inline-flex;align-items:center;gap:3px}
.radio+.radio{margin-left:134px}
.radio i{width:12px;height:12px;border-radius:50%;border:1px solid #333;background:#fff;display:block}
.radio.on i{background:radial-gradient(circle,#222 0 3.500px,#fff 4px)}
.cad{background:#000;margin-top:2px}
.cw{fill:none;stroke:#fff;stroke-width:1}
.sf{font-family:"Liberation Serif",serif;fill:#fff}
.w26{font-size:29px}
.w30{font-size:30px}
.gn{font:12.500px "Liberation Mono",monospace;letter-spacing:-.6px;fill:#00ff00}
.big{font:31px "Noto Sans CJK SC",sans-serif;font-weight:300;fill:#fff}
.rd{fill:none;stroke:#ff0000;stroke-width:2}
.yd{stroke:#ffff00;fill:none}
.lb text{font:12.600px "Noto Sans CJK SC",sans-serif;fill:#fff}
.dlg-foot{flex:1;border-top:1px solid #d0d0d0;display:flex;align-items:flex-start;padding:8px 25px 0 337px;gap:15px}
.btn{width:89px;height:24px;background:#e6e6e6;border:1px solid #adadad;text-align:center;line-height:22px;font-size:12.4px}
.btn.first{width:88px}
.btn.push{margin-left:auto}
```
